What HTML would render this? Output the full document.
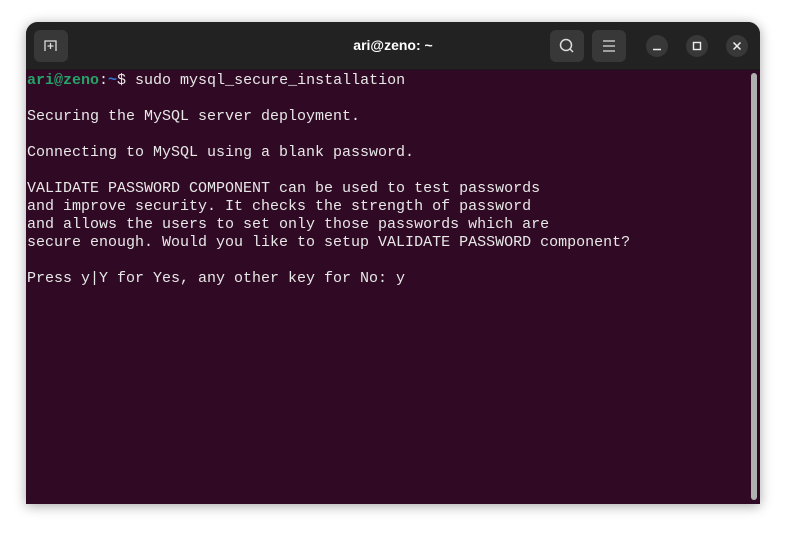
<!DOCTYPE html>
<html><head><style>
body{margin:0;width:786px;height:533px;background:#fff;position:relative;overflow:hidden;font-family:"Liberation Sans",sans-serif}
.win{position:absolute;left:26px;top:22px;width:734px;height:482px;border-radius:12px 12px 0 0;overflow:hidden;box-shadow:0 2px 12px rgba(0,0,0,.35);background:#300a24}
.hdr{position:absolute;left:0;top:0;width:734px;height:47px;background:#222;border-bottom:1px solid #1a1a1a}
.btn{position:absolute;top:8px;width:34px;height:32px;background:#383838;border-radius:6px}
.circ{position:absolute;top:13px;width:22px;height:22px;border-radius:50%;background:#383838}
.title{position:absolute;left:0;width:734px;top:15px;text-align:center;color:#fff;font-weight:bold;font-size:14px}
pre{position:absolute;left:1px;top:50px;margin:0;font-family:"Liberation Mono",monospace;font-size:15px;line-height:18px;color:#e8e8e8}
.g{color:#26a269;font-weight:bold}.b{color:#2a7bde;font-weight:bold}
.sb{position:absolute;left:725px;top:51px;width:6px;height:427px;background:#b0b0b0;border-radius:3px}
</style></head><body>
<div class="win">
<div class="hdr">
<div class="btn" style="left:8px"><svg width="34" height="32"><path d="M11 21 V11 H22 V21" fill="none" stroke="#ddd" stroke-width="1.3"/><path d="M16.5 13 V19 M13.5 16 H19.5" stroke="#ddd" stroke-width="1.3"/></svg></div>
<div class="title">ari@zeno: ~</div>
<div class="btn" style="left:524px"><svg width="34" height="32"><circle cx="16" cy="15" r="5.5" fill="none" stroke="#ddd" stroke-width="1.5"/><path d="M20 19 L23 22" stroke="#ddd" stroke-width="1.5"/></svg></div>
<div class="btn" style="left:566px"><svg width="34" height="32"><path d="M11 11 H23 M11 16 H23 M11 21 H23" stroke="#ddd" stroke-width="1.3"/></svg></div>
<div class="circ" style="left:620px"><svg width="22" height="22"><path d="M7 14.5 H15" stroke="#eee" stroke-width="1.5"/></svg></div>
<div class="circ" style="left:660px"><svg width="22" height="22"><rect x="7.5" y="7.5" width="7" height="7" fill="none" stroke="#eee" stroke-width="1.4"/></svg></div>
<div class="circ" style="left:700px"><svg width="22" height="22"><path d="M7.5 7.5 L14.5 14.5 M14.5 7.5 L7.5 14.5" stroke="#eee" stroke-width="1.5"/></svg></div>
</div>
<pre><span class="g">ari@zeno</span>:<span class="b">~</span>$ sudo mysql_secure_installation

Securing the MySQL server deployment.

Connecting to MySQL using a blank password.

VALIDATE PASSWORD COMPONENT can be used to test passwords
and improve security. It checks the strength of password
and allows the users to set only those passwords which are
secure enough. Would you like to setup VALIDATE PASSWORD component?

Press y|Y for Yes, any other key for No: y</pre>
<div class="sb"></div>
</div>
</body></html>
